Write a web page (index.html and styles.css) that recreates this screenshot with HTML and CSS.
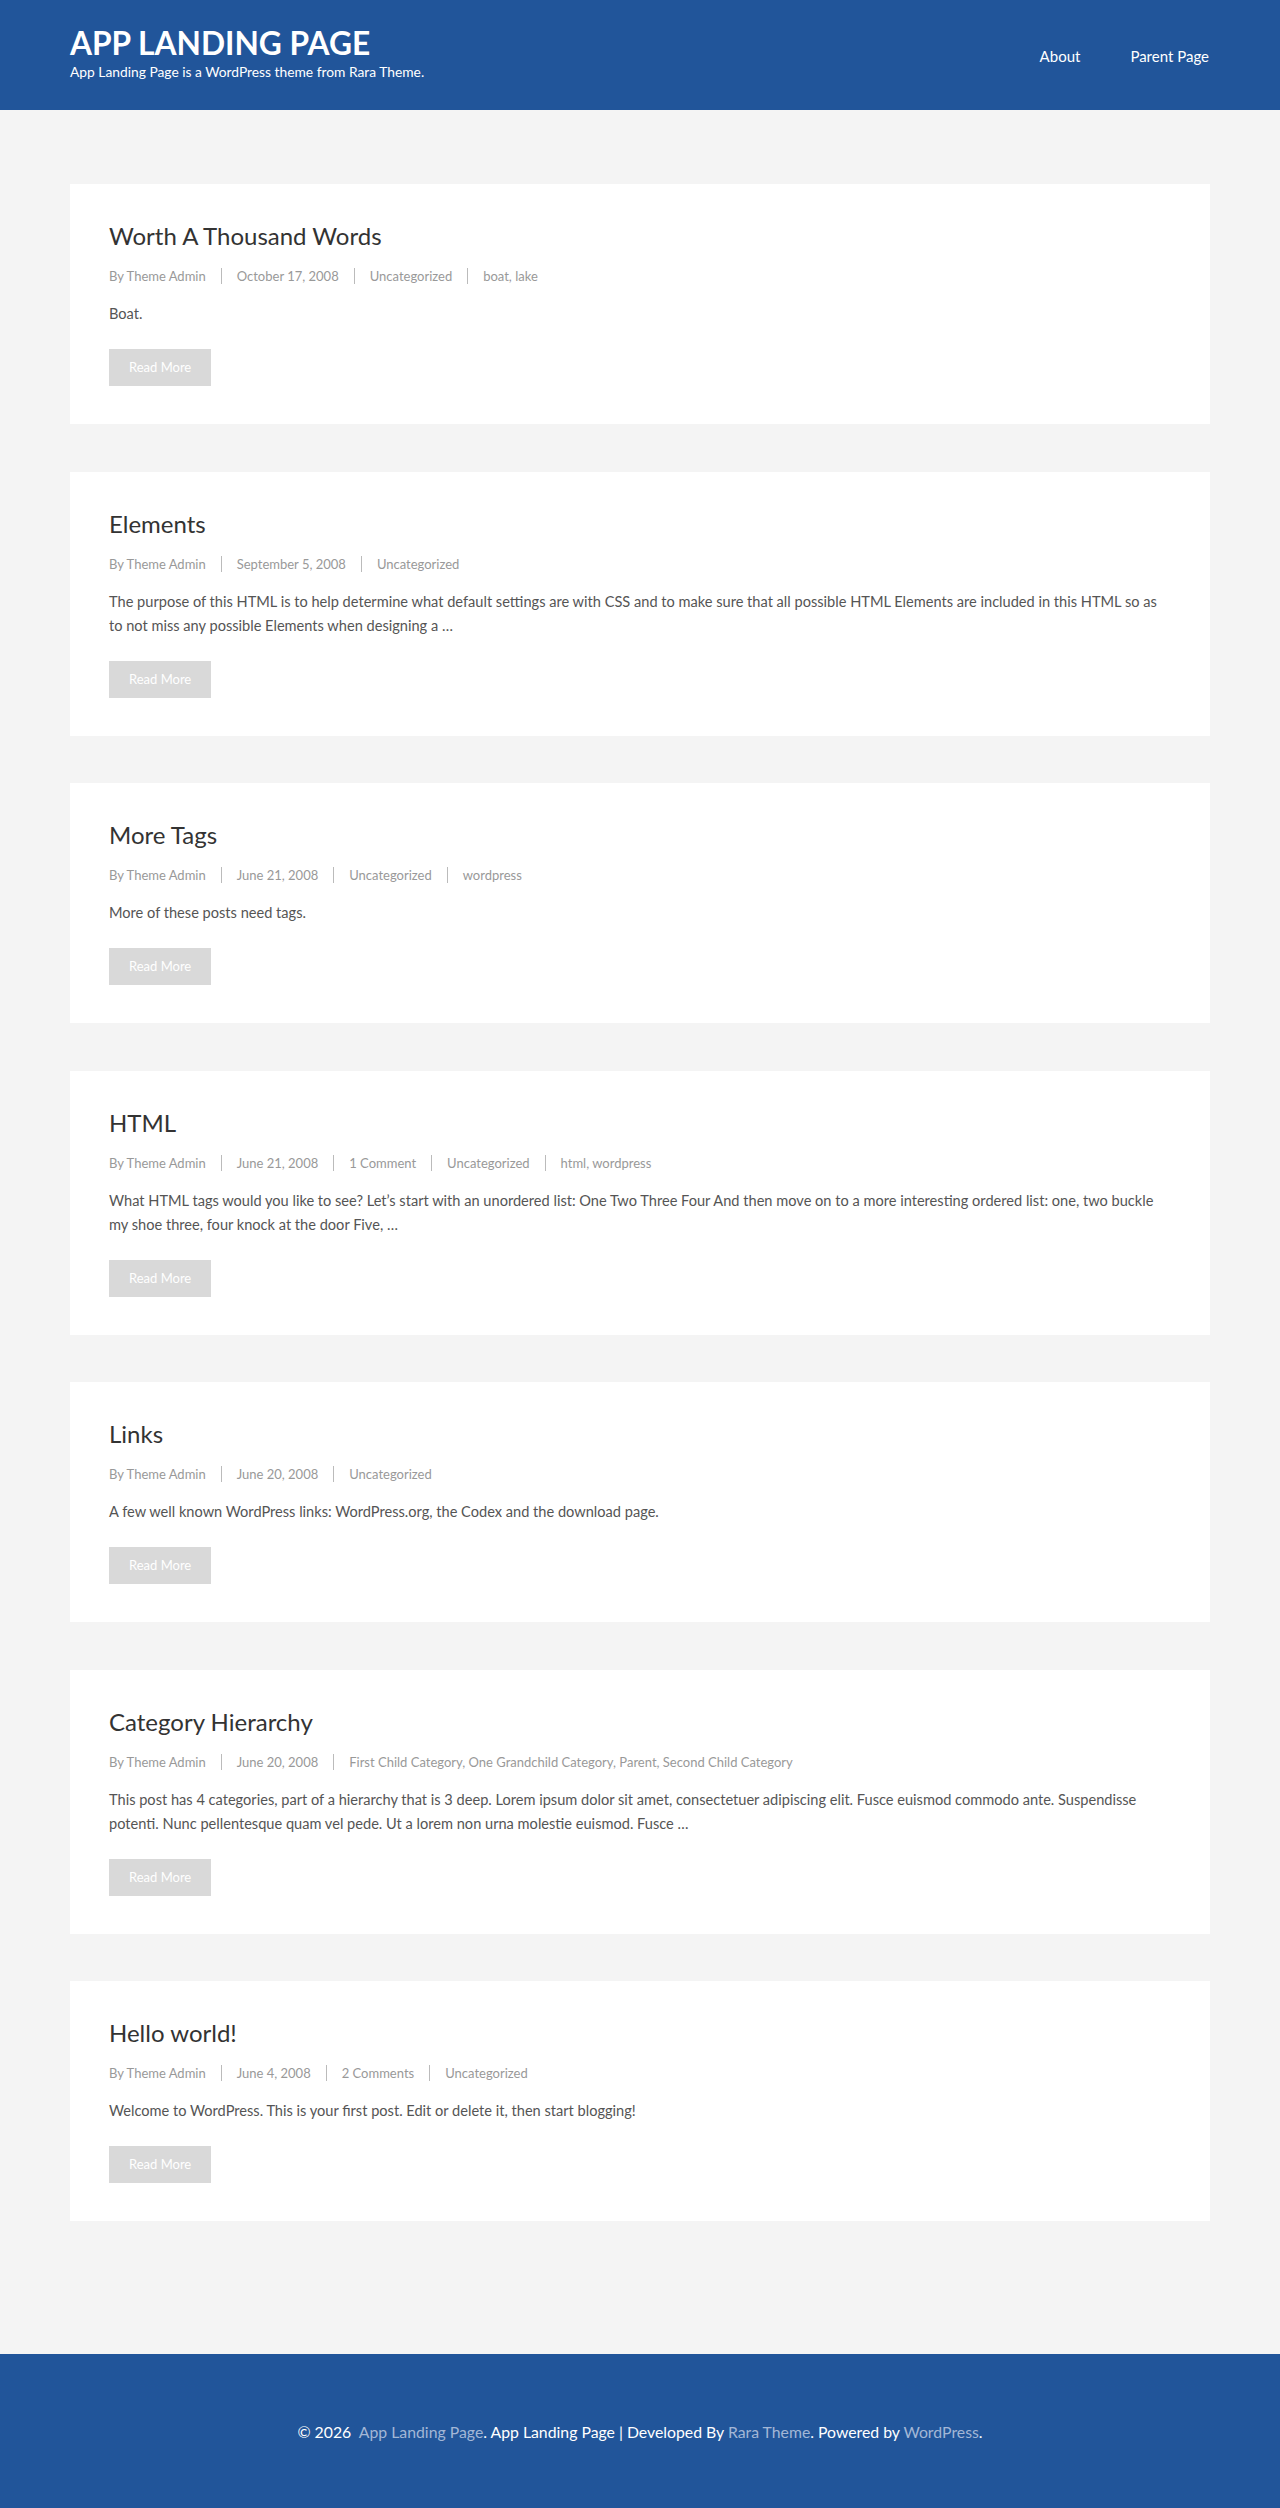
FILE: index.html
```html
<!DOCTYPE html>
<html lang="en">
<head>
<meta charset="utf-8">
<title>App Landing Page</title>
<link rel="stylesheet" href="styles.css">
</head>
<body>
<header class="site-header">
  <div class="container header-inner">
    <div class="branding">
      <h1 class="site-title">APP LANDING PAGE</h1>
      <p class="site-desc">App Landing Page is a WordPress theme from Rara Theme.</p>
    </div>
    <nav class="main-nav">
      <a href="#">About</a>
      <a href="#">Parent Page</a>
    </nav>
  </div>
</header>

<main class="site-main">
  <div class="container posts">
    <article class="post">
      <h2 class="post-title">Worth A Thousand Words</h2>
      <div class="meta"><span>By Theme Admin</span><span>October 17, 2008</span><span>Uncategorized</span><span>boat, lake</span></div>
      <p class="excerpt">Boat.</p>
      <a class="btn" href="#">Read More</a>
    </article>
    <article class="post">
      <h2 class="post-title">Elements</h2>
      <div class="meta"><span>By Theme Admin</span><span>September 5, 2008</span><span>Uncategorized</span></div>
      <p class="excerpt">The purpose of this HTML is to help determine what default settings are with CSS and to make sure that all possible HTML Elements are included in this HTML so as to not miss any possible Elements when designing a …</p>
      <a class="btn" href="#">Read More</a>
    </article>
    <article class="post">
      <h2 class="post-title">More Tags</h2>
      <div class="meta"><span>By Theme Admin</span><span>June 21, 2008</span><span>Uncategorized</span><span>wordpress</span></div>
      <p class="excerpt">More of these posts need tags.</p>
      <a class="btn" href="#">Read More</a>
    </article>
    <article class="post">
      <h2 class="post-title">HTML</h2>
      <div class="meta"><span>By Theme Admin</span><span>June 21, 2008</span><span>1 Comment</span><span>Uncategorized</span><span>html, wordpress</span></div>
      <p class="excerpt">What HTML tags would you like to see? Let’s start with an unordered list: One Two Three Four And then move on to a more interesting ordered list: one, two buckle my shoe three, four knock at the door Five, …</p>
      <a class="btn" href="#">Read More</a>
    </article>
    <article class="post">
      <h2 class="post-title">Links</h2>
      <div class="meta"><span>By Theme Admin</span><span>June 20, 2008</span><span>Uncategorized</span></div>
      <p class="excerpt">A few well known WordPress links: WordPress.org, the Codex and the download page.</p>
      <a class="btn" href="#">Read More</a>
    </article>
    <article class="post">
      <h2 class="post-title">Category Hierarchy</h2>
      <div class="meta"><span>By Theme Admin</span><span>June 20, 2008</span><span>First Child Category, One Grandchild Category, Parent, Second Child Category</span></div>
      <p class="excerpt">This post has 4 categories, part of a hierarchy that is 3 deep. Lorem ipsum dolor sit amet, consectetuer adipiscing elit. Fusce euismod commodo ante. Suspendisse potenti. Nunc pellentesque quam vel pede. Ut a lorem non urna molestie euismod. Fusce …</p>
      <a class="btn" href="#">Read More</a>
    </article>
    <article class="post">
      <h2 class="post-title">Hello world!</h2>
      <div class="meta"><span>By Theme Admin</span><span>June 4, 2008</span><span>2 Comments</span><span>Uncategorized</span></div>
      <p class="excerpt">Welcome to WordPress. This is your first post. Edit or delete it, then start blogging!</p>
      <a class="btn" href="#">Read More</a>
    </article>
  </div>
</main>

<footer class="site-footer">
  <p>© 2026&nbsp; <a href="#">App Landing Page</a>. App Landing Page | Developed By <a href="#">Rara Theme</a>. Powered by <a href="#">WordPress</a>.</p>
</footer>
</body>
</html>
```

FILE: styles.css
```css
* { box-sizing: border-box; }
html, body { margin: 0; padding: 0; }
body {
  font-family: Lato, "Open Sans", Arial, sans-serif;
  background: #f4f4f4;
  color: #555;
}
a { text-decoration: none; }
.container { width: 1140px; margin: 0 auto; }

.site-header { background: #21559a; height: 110px; }
.header-inner {
  height: 110px;
  display: flex;
  justify-content: space-between;
  align-items: center;
}
.branding { padding-bottom: 7px; }
.site-title {
  margin: 0;
  font-size: 31.7px;
  font-weight: 700;
  line-height: 38px;
  color: #fff;
}
.site-desc {
  margin: 1px 0 0;
  font-size: 13.8px;
  line-height: 17px;
  color: #fff;
}
.main-nav { display: flex; gap: 50px; padding-top: 2px; padding-right: 1px; }
.main-nav a { color: #fff; font-size: 15px; line-height: 18px; }

.site-main { padding: 74px 0 133px; }
.posts { display: flex; flex-direction: column; gap: 47.5px; }
.post {
  background: #fff;
  padding: 38px 39px;
}
.post-title {
  margin: 0 0 18px;
  font-size: 24px;
  font-weight: 400;
  line-height: 28px;
  color: #333;
}
.meta {
  display: flex;
  flex-wrap: wrap;
  font-size: 13px;
  line-height: 16px;
  color: #999;
}
.meta span { padding: 0 15px; border-left: 1px solid #bbb; }
.meta span:first-child { padding-left: 0; border-left: 0; }
.excerpt {
  margin: 18px 0 23px;
  font-size: 14.6px;
  line-height: 24px;
  color: #555;
}
.btn {
  display: inline-block;
  background: #d9d9d9;
  color: #fff;
  font-size: 13px;
  line-height: 17px;
  padding: 10px 20px;
}

.site-footer {
  background: #21559a;
  height: 154px;
  display: flex;
  align-items: center;
  justify-content: center;
}
.site-footer p {
  margin: 0;
  font-size: 15.8px;
  line-height: 19px;
  color: #fff;
}
.site-footer a { color: #a3b7d6; }
```
